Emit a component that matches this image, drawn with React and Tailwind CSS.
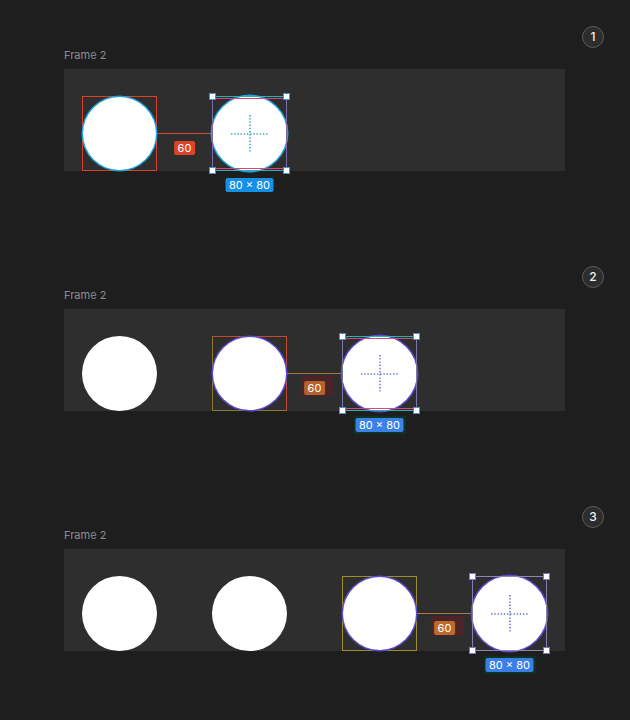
import React from 'react'

// one palette per step: the GIF frames drift in colour as the selection moves
const STEPS = [
  {
    plain: 0,
    box: 'border-[#d9402e]',
    ring: 'shadow-[0_0_0_1.5px_#1ea2dc]',
    line: 'bg-[#e0403a]',
    tag: 'bg-[#dc4329]',
    tagGhost: '',
    side: 'border-[#7d6aa8]',
    edge: 'border-[#2ab0b4]',
    edgeInner: 'bg-[#e0407a]',
    cross: '#3aa6c4',
    size: 'bg-[#1590e6]',
    sizeGhost: '',
    handle: 'border-[#3f93dc]',
  },
  {
    plain: 1,
    box: 'border-t-[#c24a30] border-r-[#c24a30] border-l-[#8a7a30] border-b-[#8a7a30]',
    ring: 'shadow-[0_0_0_1.5px_#5a4ad0]',
    line: 'bg-[#a87a3a]',
    tag: 'bg-[#b5622c]',
    tagGhost: 'bg-[#4a2426]',
    side: 'border-[#7a78a8]',
    edge: 'border-[#2ab0b4]',
    edgeInner: 'bg-[#c8507a]',
    cross: '#6a7ec8',
    size: 'bg-[#3b82e6]',
    sizeGhost: 'bg-[#0e3326]',
    handle: 'border-[#5a88d8]',
  },
  {
    plain: 2,
    box: 'border-[#a08a2c]',
    ring: 'shadow-[0_0_0_1.5px_#5a4ad0]',
    line: 'bg-[#b07a3c]',
    tag: 'bg-[#bb6c2c]',
    tagGhost: 'bg-[#4a2426]',
    side: 'border-[#8080b0]',
    edge: 'border-[#8a88b4]',
    edgeInner: 'bg-transparent',
    cross: '#6a72c8',
    size: 'bg-[#3b7ee6]',
    sizeGhost: 'bg-[#0e3326]',
    handle: 'border-[#7a76c8]',
  },
]

function Dot() {
  return <div className="h-[75px] w-[75px] shrink-0 rounded-full bg-white" />
}

function Measured({ s }) {
  return (
    <div className={`h-[75px] w-[75px] shrink-0 border ${s.box}`}>
      <div className={`h-full w-full rounded-full bg-white ${s.ring}`} />
    </div>
  )
}

function Distance({ s }) {
  return (
    <div className="relative flex h-[75px] w-[55px] shrink-0 items-center">
      <div className={`h-[1.5px] w-full ${s.line}`} />
      {s.tagGhost && (
        <span className={`absolute left-[14px] top-[40px] h-[20px] w-[32px] ${s.tagGhost}`} />
      )}
      <span
        className={`absolute left-1/2 top-[45px] -translate-x-1/2 rounded-[2px] px-[4px] text-[11px] leading-[14px] text-white ${s.tag}`}
      >
        60
      </span>
    </div>
  )
}

function Selected({ s }) {
  return (
    <div className="relative flex h-[75px] w-[75px] shrink-0 items-center justify-center">
      <div className={`absolute inset-0 rounded-full bg-white ${s.ring}`} />
      <div className={`absolute inset-0 border-x ${s.side}`} />
      <div className={`absolute inset-x-0 top-0 h-px border-t ${s.edge}`} />
      <div className={`absolute inset-x-0 top-[2px] h-px ${s.edgeInner}`} />
      <div className={`absolute inset-x-0 bottom-[2px] h-px ${s.edgeInner}`} />
      <div className={`absolute inset-x-0 bottom-0 h-px border-b ${s.edge}`} />

      {/* centre cross */}
      <svg width="40" height="40" viewBox="0 0 40 40" className="relative">
        <path d="M1 20H39M20 1V39" stroke={s.cross} strokeWidth="1.6" strokeDasharray="1.4 1.8" fill="none" />
      </svg>

      <span className={`absolute -left-[3px] -top-[3px] h-[7px] w-[7px] border bg-white ${s.handle}`} />
      <span className={`absolute -right-[3px] -top-[3px] h-[7px] w-[7px] border bg-white ${s.handle}`} />
      <span className={`absolute -bottom-[3px] -left-[3px] h-[7px] w-[7px] border bg-white ${s.handle}`} />
      <span className={`absolute -bottom-[3px] -right-[3px] h-[7px] w-[7px] border bg-white ${s.handle}`} />

      {s.sizeGhost && (
        <span className={`absolute left-1/2 top-[80px] h-[18px] w-[52px] -translate-x-1/2 ${s.sizeGhost}`} />
      )}
      <span
        className={`absolute left-1/2 top-[82px] -translate-x-1/2 whitespace-nowrap rounded-[2px] px-[4px] text-[11px] leading-[14px] text-white ${s.size}`}
      >
        80 × 80
      </span>
    </div>
  )
}

function Step({ n, s }) {
  const lead = []
  for (let i = 0; i < s.plain; i++) {
    lead.push(<Dot key={`d${i}`} />, <div key={`g${i}`} className="w-[55px] shrink-0" />)
  }
  return (
    <section className="flex flex-col">
      <div className="flex justify-end pr-[26px]">
        <span className="flex h-[22px] w-[22px] items-center justify-center rounded-full border border-[#5c5c5c] bg-[#2d2d2d] text-[12px] font-medium leading-none text-[#f0f0f0]">
          {n}
        </span>
      </div>
      <p className="pl-[64px] text-[11px] leading-[14px] text-[#8c8c8c]">Frame 2</p>
      <div className="ml-[64px] mt-[7px] flex h-[102px] w-[501px] items-end bg-[#2e2e2e] pl-[18px]">
        {lead}
        <Measured s={s} />
        <Distance s={s} />
        <Selected s={s} />
      </div>
    </section>
  )
}

export default function App() {
  return (
    <div
      className="flex h-[720px] w-[630px] flex-col gap-[95px] bg-[#1e1e1e] pt-[26px]"
      style={{ fontFamily: 'Inter, "Noto Sans", sans-serif' }}
    >
      {STEPS.map((s, i) => (
        <Step key={i} n={i + 1} s={s} />
      ))}
    </div>
  )
}
